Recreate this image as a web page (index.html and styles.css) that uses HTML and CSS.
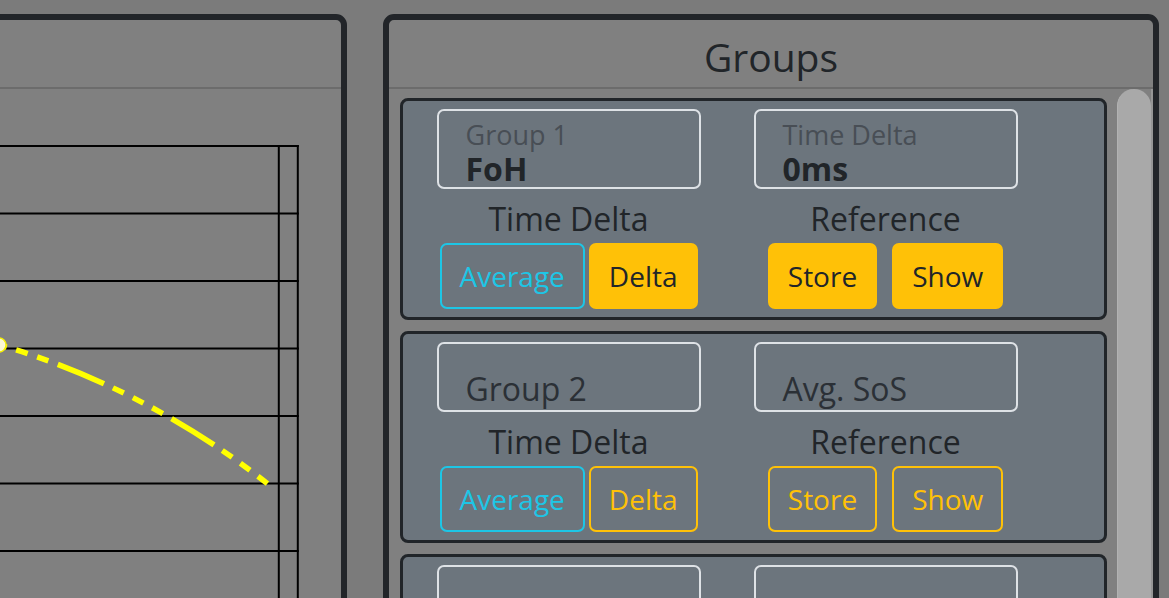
FILE: index.html
```html
<!DOCTYPE html>
<html lang="en">
<head>
    <meta charset="UTF-8">
    <meta name="viewport" content="width=device-width, initial-scale=1.0">
    <title>Groups</title>
    <link rel="stylesheet" href="styles.css">
</head>
<body>
    <div class="wrap">
        <div class="panel panel-chart">
            <div class="panel-head"></div>
            <svg class="chart" width="375" height="520" viewBox="-34 89 375 520">
                <g stroke="#000" stroke-width="2">
                    <line x1="-34" y1="146" x2="298.8" y2="146"/>
                    <line x1="-34" y1="213.5" x2="298.8" y2="213.5"/>
                    <line x1="-34" y1="281" x2="298.8" y2="281"/>
                    <line x1="-34" y1="348.5" x2="298.8" y2="348.5"/>
                    <line x1="-34" y1="416" x2="298.8" y2="416"/>
                    <line x1="-34" y1="483.5" x2="298.8" y2="483.5"/>
                    <line x1="-34" y1="551" x2="298.8" y2="551"/>
                    <line x1="-34" y1="618.5" x2="298.8" y2="618.5"/>
                    <line x1="278.8" y1="145" x2="278.8" y2="620"/>
                    <line x1="297.8" y1="145" x2="297.8" y2="620"/>
                </g>
                <path d="M3 346 C80 368 182 414 274 489" fill="none" stroke="#ffff00" stroke-width="5.5"
                      stroke-dasharray="50 10 12 10 12 10 12 10" stroke-dashoffset="68"/>
                <circle cx="-1" cy="345" r="7" fill="#fbf8d6" stroke="#f4f000" stroke-width="1.5"/>
            </svg>
        </div>

        <div class="panel panel-groups">
            <div class="panel-head">Groups</div>
            <div class="groups-body">
                <div class="group-list">
                    <!-- group 1 -->
                    <div class="group-card">
                        <div class="group-col">
                            <div class="field">
                                <span class="field-label">Group 1</span>
                                <span class="field-value">FoH</span>
                            </div>
                            <div class="col-title">Time Delta</div>
                            <div class="btn-row tight">
                                <button class="btn btn-info">Average</button>
                                <button class="btn btn-warn">Delta</button>
                            </div>
                        </div>
                        <div class="group-col">
                            <div class="field">
                                <span class="field-label">Time Delta</span>
                                <span class="field-value">0ms</span>
                            </div>
                            <div class="col-title">Reference</div>
                            <div class="btn-row">
                                <button class="btn btn-warn">Store</button>
                                <button class="btn btn-warn">Show</button>
                            </div>
                        </div>
                    </div>

                    <!-- group 2 -->
                    <div class="group-card">
                        <div class="group-col">
                            <div class="field empty">
                                <span class="field-label">Group 2</span>
                            </div>
                            <div class="col-title">Time Delta</div>
                            <div class="btn-row tight">
                                <button class="btn btn-info">Average</button>
                                <button class="btn btn-warn-outline">Delta</button>
                            </div>
                        </div>
                        <div class="group-col">
                            <div class="field empty">
                                <span class="field-label">Avg. SoS</span>
                            </div>
                            <div class="col-title">Reference</div>
                            <div class="btn-row">
                                <button class="btn btn-warn-outline">Store</button>
                                <button class="btn btn-warn-outline">Show</button>
                            </div>
                        </div>
                    </div>

                    <!-- group 3 (mostly below the fold) -->
                    <div class="group-card">
                        <div class="group-col">
                            <div class="field empty"></div>
                        </div>
                        <div class="group-col">
                            <div class="field empty"></div>
                        </div>
                    </div>
                </div>
                <div class="scroll-track">
                    <div class="scroll-thumb"></div>
                </div>
            </div>
        </div>
    </div>
</body>
</html>
```

FILE: styles.css
```css
* {
    margin: 0;
    padding: 0;
    box-sizing: border-box;
}
body {
    background: #7b7b7b;
    font-family: "Open Sans", "Noto Sans", sans-serif;
    color: #212529;
    overflow: hidden;
    height: 598px;
}
.wrap {
    display: flex;
    gap: 36px;
    padding-top: 14px;
    margin-left: -40px;
}

/* outer panels */
.panel {
    background: #808080;
    border: 6px solid #222529;
    border-radius: 11px;
    height: 640px;
    overflow: hidden;
}
.panel-chart {
    width: 387px;
}
.panel-groups {
    width: 776px;
    display: flex;
    flex-direction: column;
}
.panel-head {
    height: 69px;
    padding-top: 6px;
    line-height: 61px;
    font-size: 39px;
    text-align: center;
    color: #212529;
    border-bottom: 2px solid #6c6c6c;
    flex-shrink: 0;
}
.chart {
    display: block;
}

/* groups list */
.groups-body {
    display: flex;
    gap: 10px;
    padding-left: 11px;
    flex: 1;
}
.group-list {
    width: 707px;
    display: flex;
    flex-direction: column;
    gap: 11px;
    padding-top: 9px;
}
.group-card {
    display: flex;
    background: #6c757d;
    border: 3px solid #212529;
    border-radius: 8px;
    padding: 8px 0 8px 7px;
}
.group-col {
    width: 317px;
    display: flex;
    flex-direction: column;
    align-items: center;
}
.field {
    width: 264px;
    height: 80px;
    border: 2px solid #dee2e6;
    border-radius: 7px;
    padding: 8px 0 0 27px;
    display: flex;
    flex-direction: column;
}
.field-label {
    font-size: 27px;
    line-height: 32px;
    color: #484e55;
}
.field-value {
    font-size: 32px;
    line-height: 36px;
    font-weight: bold;
    color: #212529;
}
.field.empty {
    height: 70px;
    padding-top: 29px;
}
.field.empty .field-label {
    font-size: 32px;
    color: #2b3036;
}
.col-title {
    height: 54px;
    padding-top: 6px;
    line-height: 48px;
    font-size: 32px;
    color: #212529;
}
.btn-row {
    display: flex;
    gap: 15px;
}
.btn-row.tight {
    gap: 4px;
}
.btn {
    height: 66px;
    padding: 0 18px;
    border: 2px solid transparent;
    border-radius: 7px;
    font-family: inherit;
    font-size: 28px;
    line-height: 62px;
    background: transparent;
}
.btn-info {
    border-color: #1dc6e6;
    color: #1dc6e6;
}
.btn-warn {
    background: #ffc107;
    border-color: #ffc107;
    color: #212529;
}
.btn-warn-outline {
    border-color: #ffc107;
    color: #ffc107;
}

/* fake scrollbar */
.scroll-track {
    width: 36px;
    display: flex;
}
.scroll-thumb {
    width: 34px;
    background: #a9a9a9;
    border-radius: 17px 17px 0 0;
    border-left: 1px solid #b2b2b2;
}
.scroll-track::after {
    content: "";
    width: 2px;
    background: #969696;
}
```
